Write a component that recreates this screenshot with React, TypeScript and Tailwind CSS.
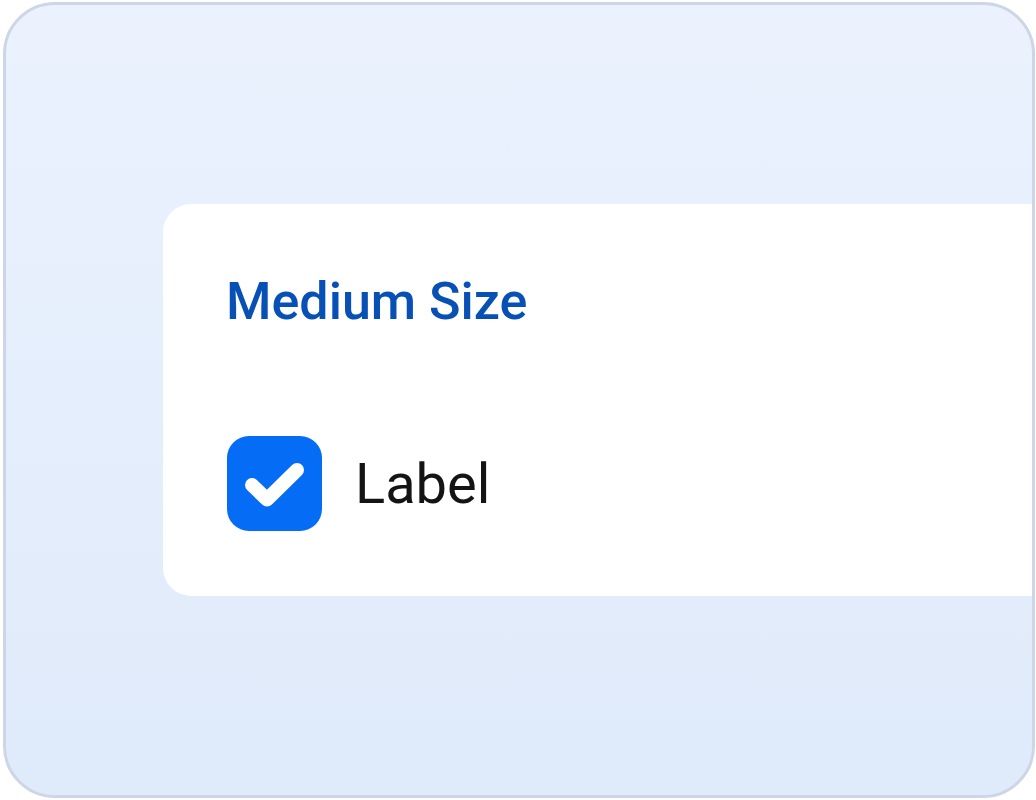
import React from "react";

function CheckIcon() {
  return (
    <svg width="95" height="95" viewBox="0 0 95 95" fill="none">
      <path
        d="M25 49 L40 63.5 L70 34"
        stroke="#ffffff"
        strokeWidth="14"
        strokeLinecap="round"
        strokeLinejoin="round"
      />
    </svg>
  );
}

export default function App() {
  return (
    <div className="w-[1036px] h-[800px] bg-white pt-[2px] pl-[3px]" style={{ fontFamily: "Roboto, 'Noto Sans', sans-serif" }}>
      <div className="w-[1032px] h-[796px] rounded-[52px] border-[3px] border-[#cdd6e6] overflow-hidden bg-gradient-to-b from-[#ebf2fe] to-[#dfeafa] pt-[199px] pl-[157px]">
        <div className="w-[1000px] bg-white rounded-[28px] pl-[64px] pt-[72px] pb-[65px]">
          <div className="-ml-[1px] text-[52px] leading-[52px] font-medium text-[#0750b6]">Medium Size</div>
          <div className="mt-[108px] flex items-center gap-[33px]">
            <div className="w-[95px] h-[95px] rounded-[22px] bg-[#056cf6] flex items-center justify-center">
              <CheckIcon />
            </div>
            <span className="text-[56px] leading-[56px] text-[#141414]">Label</span>
          </div>
        </div>
      </div>
    </div>
  );
}
